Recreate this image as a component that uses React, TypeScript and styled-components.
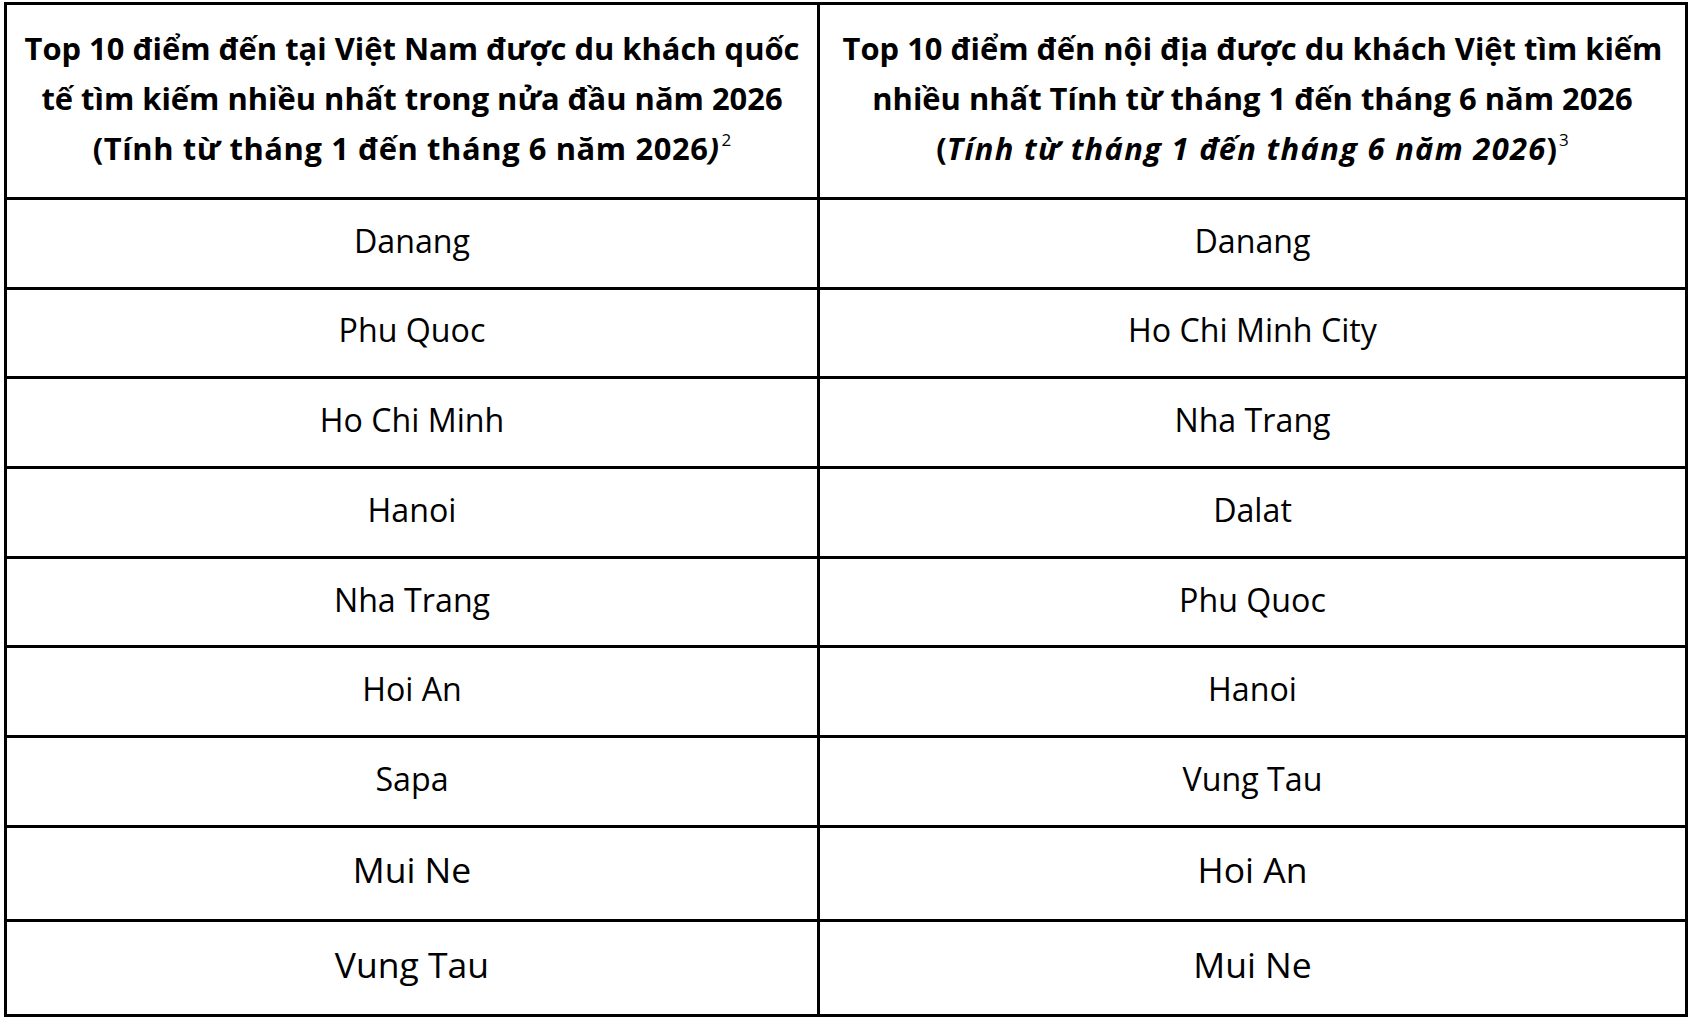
import React from "react";
import styled, { createGlobalStyle } from "styled-components";

const Global = createGlobalStyle`
  html, body { margin: 0; padding: 0; background: #fff; }
  body { font-family: "Open Sans", "Noto Sans", sans-serif; color: #000; }
`;

const Page = styled.div`
  padding: 2px 0 0 4px;
`;

const Table = styled.table`
  width: 1684px;
  table-layout: fixed;
  border-collapse: separate;
  border-spacing: 0;
  border: 3px solid #000;
  tr:last-child td { border-bottom: none; }
  td:last-child, th:last-child { border-right: none; }
`;

const HeadCell = styled.th`
  box-sizing: border-box;
  height: 195px;
  border-right: 3px solid #000;
  border-bottom: 3px solid #000;
  padding: 0 8px 7px;
  font-size: 30.9px;
  line-height: 50px;
  font-weight: 700;
  text-align: center;
  vertical-align: middle;
  white-space: nowrap;
`;

const Digits = styled.span`
  letter-spacing: 0.6px;
`;

const Slanted = styled.i`
  letter-spacing: 1.3px;
`;

const Sup = styled.sup`
  font-size: 17px;
  font-weight: 400;
  font-style: normal;
  line-height: 0;
  vertical-align: 0;
  position: relative;
  top: -14px;
  margin-left: 2px;
`;

const Cell = styled.td<{ $size: "normal" | "large"; $h: number }>`
  box-sizing: border-box;
  height: ${(p) => p.$h}px;
  border-right: 3px solid #000;
  border-bottom: 3px solid #000;
  padding: 0 8px 6px;
  font-size: ${(p) => (p.$size === "large" ? 35.5 : 32.2)}px;
  line-height: 1.4;
  text-align: center;
  vertical-align: middle;
`;

const rows: [string, string][] = [
  ["Danang", "Danang"],
  ["Phu Quoc", "Ho Chi Minh City"],
  ["Ho Chi Minh", "Nha Trang"],
  ["Hanoi", "Dalat"],
  ["Nha Trang", "Phu Quoc"],
  ["Hoi An", "Hanoi"],
  ["Sapa", "Vung Tau"],
  ["Mui Ne", "Hoi An"],
  ["Vung Tau", "Mui Ne"],
];

export default function App() {
  return (
    <Page>
      <Global />
      <Table>
        <colgroup>
          <col style={{ width: 813 }} />
          <col />
        </colgroup>
        <tbody>
          <tr>
            <HeadCell>
              Top 10 điểm đến tại Việt Nam được du khách quốc
              <br />
              tế tìm kiếm nhiều nhất trong nửa đầu năm 2026
              <br />
              <Digits>(Tính từ tháng 1 đến tháng 6 năm 2026<i>)</i></Digits>
              <Sup>2</Sup>
            </HeadCell>
            <HeadCell>
              Top 10 điểm đến nội địa được du khách Việt tìm kiếm
              <br />
              nhiều nhất Tính từ tháng 1 đến tháng 6 năm 2026
              <br />
              (<Slanted>Tính từ tháng 1 đến tháng 6 năm 2026</Slanted>)
              <Sup>3</Sup>
            </HeadCell>
          </tr>
          {rows.map(([a, b], i) => {
            const large = i >= 7;
            const h = i === 8 ? 92.4 : i === 7 ? 93.7 : 89.7;
            return (
              <tr key={i}>
                <Cell $size={large ? "large" : "normal"} $h={h}>{a}</Cell>
                <Cell $size={large ? "large" : "normal"} $h={h}>{b}</Cell>
              </tr>
            );
          })}
        </tbody>
      </Table>
    </Page>
  );
}
